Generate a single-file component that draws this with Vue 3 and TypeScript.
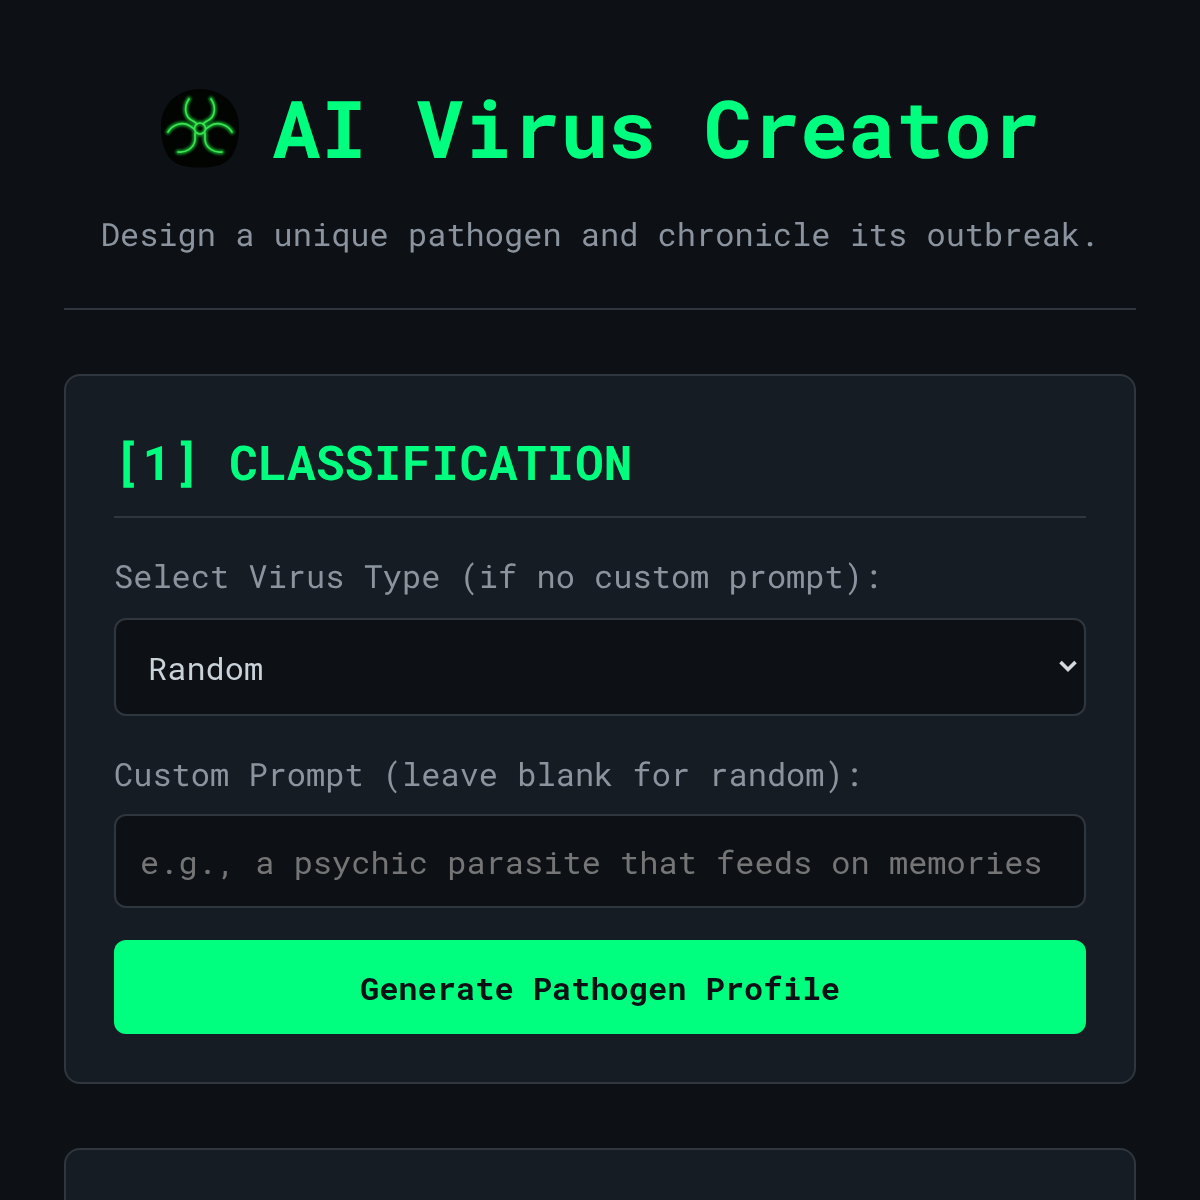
<script setup lang="ts">
import { ref } from 'vue'
const virusType = ref('Random')
const prompt = ref('')
const types: string[] = ['Random', 'Retrovirus', 'Bacteriophage', 'Prion']
const hazardPaths: string[] = [
  'M29 11C24 18 24 29 33 33C35 34 36 35 37 36',
  'M51 11C56 18 56 29 47 33C45 34 44 35 43 36',
  'M8 44C12 37 22 33 30 38C32 39 33 40 34 41',
  'M72 44C68 37 58 33 50 38C48 39 47 40 46 41',
  'M18 64C26 65 34 60 35 52C35 50 35 48 35 45',
  'M62 64C54 65 46 60 45 52C45 50 45 48 45 45',
]
</script>

<template>
  <div class="page">
    <header class="hero">
      <h1 class="title">
        <svg class="emblem" viewBox="0 0 80 80" aria-hidden="true">
          <path class="dome" d="M40 1C62 1 79 16 79 38C79 50 77 59 73 66C70 72 64 76 56 78C46 80 34 80 24 78C16 76 10 72 7 66C3 59 1 50 1 38C1 16 18 1 40 1Z" />
          <g class="hazard glow">
            <path v-for="d in hazardPaths" :key="d" :d="d" />
            <circle cx="40" cy="40.5" r="5.5" />
          </g>
          <g class="hazard core">
            <path v-for="d in hazardPaths" :key="d" :d="d" />
            <circle cx="40" cy="40.5" r="5.5" />
          </g>
        </svg>
        <span class="title-text">AI Virus Creator</span>
      </h1>
      <p class="subtitle">Design a unique pathogen and chronicle its outbreak.</p>
    </header>

    <section class="card">
      <h2 class="card-title">[1] CLASSIFICATION</h2>
      <label class="field-label" for="virus-type">Select Virus Type (if no custom prompt):</label>
      <div class="select-wrap">
        <select id="virus-type" v-model="virusType" class="control select">
          <option v-for="t in types" :key="t" :value="t">{{ t }}</option>
        </select>
        <svg class="chevron" viewBox="0 0 20 14" aria-hidden="true">
          <path d="M2.5 3L10 10.5L17.5 3" />
        </svg>
      </div>
      <label class="field-label second" for="custom-prompt">Custom Prompt (leave blank for random):</label>
      <input
        id="custom-prompt"
        v-model="prompt"
        class="control input"
        type="text"
        placeholder="e.g., a psychic parasite that feeds on memories"
      />
      <button class="generate" type="button">Generate Pathogen Profile</button>
    </section>

    <section class="card next"></section>
  </div>
</template>

<style>
html, body {
  margin: 0;
  background: #0d1116;
  overflow: hidden;
}
</style>

<style scoped>
.page {
  box-sizing: border-box;
  height: 1200px;
  overflow: hidden;
  padding: 64px 64px 0;
  will-change: transform;
  text-rendering: geometricPrecision;
  font-family: "Roboto Mono", "DejaVu Sans Mono", "Liberation Mono", monospace;
  font-size: 32px;
  line-height: 1.6;
  color: #c9d1d9;
}
.hero {
  padding-bottom: 48.8px;
  border-bottom: 2px solid #30363d;
  margin-bottom: 64px;
  text-align: center;
}
.title {
  margin: 0;
  display: flex;
  align-items: center;
  justify-content: center;
  gap: 32px;
  height: 128px;
  font-size: 80px;
  line-height: 1.6;
  font-weight: 700;
  color: #00ff7f;
}
.title-text {
  line-height: 126px;
  padding-bottom: 2px;
}
.emblem {
  width: 80px;
  height: 80px;
  flex: none;
}
.dome { fill: #020402; }
.hazard {
  fill: none;
  stroke-linecap: round;
}
.glow {
  stroke: #12ad2e;
  stroke-width: 5;
  opacity: 0.8;
  filter: blur(1.3px);
}
.core {
  stroke: #3ce552;
  stroke-width: 1.7;
}
.subtitle {
  margin: 16px 0 0;
  color: #8b949e;
}
.card {
  box-sizing: border-box;
  background: #161c23;
  border: 2px solid #30363d;
  border-radius: 16px;
  padding: 48px;
}
.card.next {
  height: 200px;
  margin-top: 64px;
}
.card-title {
  margin: 0 0 32px;
  padding: 1px 0 14.2px;
  border-bottom: 2px solid #30363d;
  font-size: 48px;
  line-height: 1.6;
  font-weight: 700;
  color: #00ff7f;
}
.field-label {
  display: block;
  margin-bottom: 16.8px;
  color: #8b949e;
}
.field-label.second {
  margin-top: 32px;
  margin-bottom: 15.2px;
}
.control {
  display: block;
  box-sizing: border-box;
  width: 100%;
  border: 2px solid #30363d;
  border-radius: 12px;
  background: #0d1116;
  color: #c9d1d9;
  font-family: inherit;
  font-size: 32px;
}
.select-wrap {
  position: relative;
}
.select {
  height: 98px;
  padding: 2px 32px 0;
  appearance: none;
}
.chevron {
  position: absolute;
  top: 41px;
  right: 8px;
  width: 20px;
  height: 14px;
  fill: none;
  stroke: #d5d9dd;
  stroke-width: 3.6;
  pointer-events: none;
}
.input {
  height: 94px;
  padding: 0 24px;
}
.input::placeholder {
  color: #757575;
  opacity: 1;
}
.generate {
  display: block;
  width: 100%;
  height: 94px;
  margin-top: 32px;
  border: none;
  border-radius: 12px;
  background: #00ff7f;
  color: #0d1116;
  font-family: inherit;
  font-size: 32px;
  font-weight: 700;
}
</style>
